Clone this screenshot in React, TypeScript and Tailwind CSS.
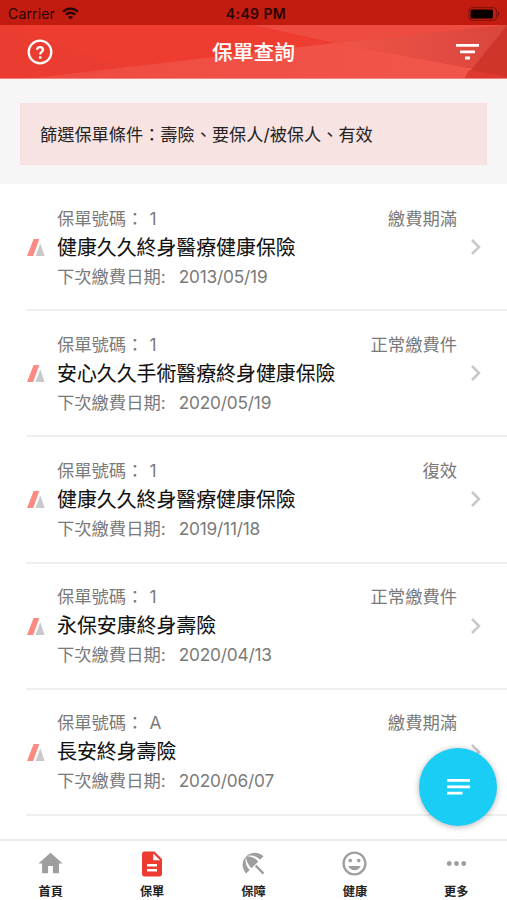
import {
  MdBeachAccess,
  MdDescription,
  MdHome,
  MdInsertEmoticon,
  MdMoreHoriz,
} from "react-icons/md";

const policies = [
  { no: "1", name: "健康久久終身醫療健康保險", date: "2013/05/19", status: "繳費期滿" },
  { no: "1", name: "安心久久手術醫療終身健康保險", date: "2020/05/19", status: "正常繳費件" },
  { no: "1", name: "健康久久終身醫療健康保險", date: "2019/11/18", status: "復效" },
  { no: "1", name: "永保安康終身壽險", date: "2020/04/13", status: "正常繳費件" },
  { no: "A", name: "長安終身壽險", date: "2020/06/07", status: "繳費期滿" },
];

const tabs = [
  { label: "首頁", icon: MdHome },
  { label: "保單", icon: MdDescription, active: true },
  { label: "保障", icon: MdBeachAccess },
  { label: "健康", icon: MdInsertEmoticon },
  { label: "更多", icon: MdMoreHoriz },
];

function StatusBar() {
  return (
    <div className="h-[25px] shrink-0 bg-[#c21c10] px-2 grid grid-cols-3 items-center text-[#2b0502]">
      <div className="flex items-center gap-[7px] pt-[2px]">
        <span className="text-[14px] leading-none tracking-[0.15px]">Carrier</span>
        <svg className="w-[17px] h-[13px]" viewBox="0 0 17 13" fill="none" stroke="currentColor" strokeWidth="2.3">
          <path d="M1 4.7c4.3-4.2 10.7-4.2 15 0" />
          <path d="M3.8 7.7c2.7-2.6 6.7-2.6 9.4 0" />
          <path d="M8.5 12.6L5.9 10c1.5-1.3 3.7-1.3 5.2 0z" fill="currentColor" stroke="none" />
        </svg>
      </div>
      <span className="text-center text-[14px] leading-none font-semibold tracking-[0.4px] pt-[3px] pl-[5px]">4:49 PM</span>
      <svg className="justify-self-end w-[32px] h-[14px] mt-[2px] -mr-[1px]" viewBox="0 0 32 14" fill="none">
        <rect x="0.7" y="0.7" width="28" height="12.6" rx="3.5" stroke="#7d1008" />
        <rect x="2.5" y="2.5" width="22.5" height="9" rx="1.6" fill="#0a0000" />
        <path d="M30 4.6c1.7.7 1.7 4.1 0 4.8z" fill="#7d1008" />
      </svg>
    </div>
  );
}

function Header() {
  return (
    <header className="relative h-[54px] shrink-0 bg-[#ef3c31] text-white overflow-hidden">
      {/* Low-poly background */}
      <svg className="absolute inset-0 w-full h-full" viewBox="0 0 507 54" preserveAspectRatio="none">
        <defs>
          <linearGradient id="ridge" x1="0" x2="1" y1="0" y2="0">
            <stop offset="0" stopColor="#ee4a3f" />
            <stop offset="1" stopColor="#f2574c" />
          </linearGradient>
          <linearGradient id="facet" x1="0" x2="1" y1="0" y2="0">
            <stop offset="0" stopColor="#f05449" />
            <stop offset="1" stopColor="#d9463c" />
          </linearGradient>
        </defs>
        <path d="M0 0L130 44L20 54H0z" fill="#e63c31" opacity=".5" />
        <path d="M25 54L335 18L507 50V54z" fill="url(#ridge)" />
        <path d="M253 0H507L335 18z" fill="#ee4c40" />
        <path d="M335 18L507 0V50z" fill="url(#facet)" />
        <path d="M507 0L464 54H507z" fill="#cf352b" />
        <path d="M464 54L469 45L507 52V54z" fill="#e03a30" />
        <path d="M0 53.2H507V54H0z" fill="#f79a94" />
      </svg>
      <div className="relative h-full flex items-center justify-between pl-[27px] pr-[28px]">
        <svg className="size-[26px]" viewBox="0 0 26 26" fill="none" stroke="currentColor">
          <circle cx="13" cy="13" r="11.3" strokeWidth="2.3" />
          <path d="M10.1 10.8c0-3.7 5.9-3.6 5.9 0 0 2.1-2.8 2.3-2.8 4.6" strokeWidth="2.3" />
          <path d="M12 17.3h2.5v2.4H12z" fill="currentColor" stroke="none" />
        </svg>
        <h1 className="text-[20.7px] leading-none font-medium pt-[2px] pr-[2px] [-webkit-text-stroke:0.1px_white]">保單查詢</h1>
        <svg className="w-[23px] h-[16px]" viewBox="0 0 23 16" fill="currentColor">
          <path d="M0 0h23v2.8H0zM4 6.4h15v2.8H4zM9 12.6h5v2.8H9z" />
        </svg>
      </div>
    </header>
  );
}

// Company mark: red slanted bar leaning on a grey wedge
function PolicyMark() {
  return (
    <svg className="w-[18px] h-[17px] mt-px ml-[1px] shrink-0" viewBox="0 0 18 17">
      <path d="M6.6 0h5.7L6.2 17H0z" fill="#fb8a82" />
      <path d="M13.3 4.2L17.6 17H8.6z" fill="#c9c9c9" />
    </svg>
  );
}

export default function App() {
  return (
    <div className="relative w-full h-[900px] flex flex-col overflow-hidden bg-white font-[Inter,'Noto_Sans_CJK_TC',sans-serif]">
      <StatusBar />
      <Header />

      <div className="h-[105px] shrink-0 bg-[#f6f6f6] px-[20px] pt-[24px]">
        <div className="h-[62px] bg-[#f8e3e3] border border-[#f7dfdf] pl-[19px] pt-[2px] flex items-center text-[17.2px] text-[#222] whitespace-nowrap">
          篩選保單條件：壽險、要保人/被保人、有效
        </div>
      </div>

      <main className="flex-1 min-h-0 overflow-hidden pt-[1px]">
        {policies.map((p, i) => (
          <div key={i} className="h-[126.2px] ml-[26px] border-b-2 border-[#efefef] flex items-center">
            <PolicyMark />
            <div className="ml-[12px] flex-1 text-[17.3px] leading-[29px] text-[#7a7a7a] whitespace-nowrap">
              <div className="flex justify-between">
                <span>保單號碼：<span className="ml-[6px]">{p.no}</span></span>
                <span>{p.status}</span>
              </div>
              <div className="relative top-[1px] text-[19.9px] text-[#111] [-webkit-text-stroke:0.08px_#111]">{p.name}</div>
              <div>
                下次繳費日期:<span className="ml-[13px] tracking-[-0.2px]">{p.date}</span>
              </div>
            </div>
            <svg className="w-[10px] h-[16px] ml-[14px] mr-[26px] shrink-0" viewBox="0 0 10 16" fill="none" stroke="#c9c9cb" strokeWidth="2.5">
              <path d="M1 1l7 7-7 7" />
            </svg>
          </div>
        ))}
      </main>

      <nav className="h-[61px] shrink-0 border-t-2 border-[#ebebeb] bg-white grid grid-cols-5">
        {tabs.map(({ label, icon: Icon, active }) => (
          <button key={label} className="flex flex-col items-center pt-[8px]">
            <Icon className={active ? "size-[30px] text-[#ee3a30]" : "size-[29px] mb-px text-[#9e9e9e]"} />
            <span className="mt-[5px] text-[12.2px] leading-[16px] font-bold text-[#222]">{label}</span>
          </button>
        ))}
      </nav>

      <button className="absolute left-[419px] top-[748px] size-[78px] rounded-full bg-[#19cdf4] text-white flex items-center justify-center shadow-[0_1px_6px_rgba(0,0,0,0.3)]">
        <svg className="w-[23px] h-[16px]" viewBox="0 0 23 16" fill="currentColor">
          <path d="M0 0h23v2.8H0zM0 6.4h23v2.8H0zM0 12.7h15.5v2.8H0z" />
        </svg>
      </button>
    </div>
  );
}
